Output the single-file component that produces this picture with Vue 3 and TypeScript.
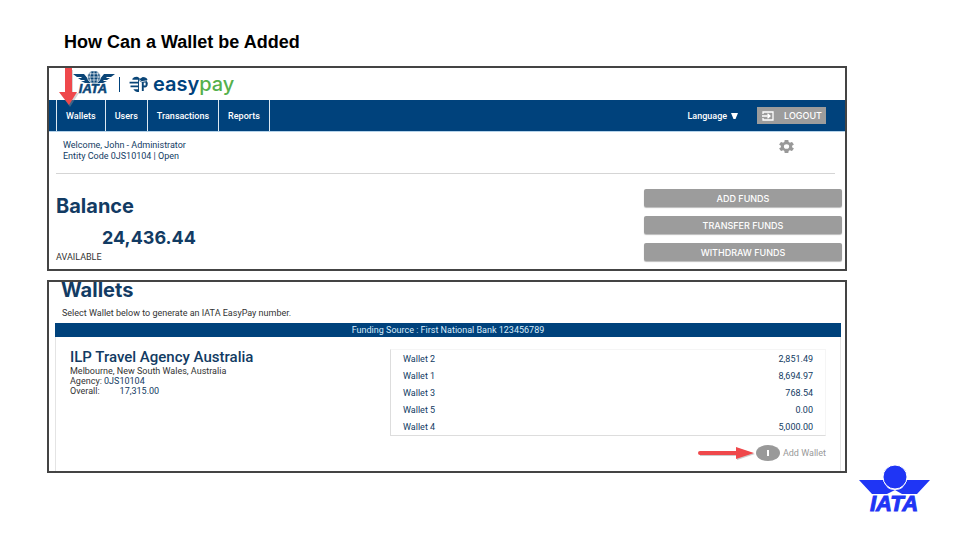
<script setup lang="ts">
interface Wallet {
  name: string
  amount: string
}

const navItems: string[] = ['Wallets', 'Users', 'Transactions', 'Reports']
const fundActions: string[] = ['ADD FUNDS', 'TRANSFER FUNDS', 'WITHDRAW FUNDS']
const wallets: Wallet[] = [
  { name: 'Wallet 2', amount: '2,851.49' },
  { name: 'Wallet 1', amount: '8,694.97' },
  { name: 'Wallet 3', amount: '768.54' },
  { name: 'Wallet 5', amount: '0.00' },
  { name: 'Wallet 4', amount: '5,000.00' },
]
</script>

<template>
  <main class="slide">
    <div class="content">
      <h1 class="title">How Can a Wallet be Added</h1>

      <section class="frame account">
        <header class="brand">
          <svg class="brand-iata" viewBox="0 0 42 26" role="img" aria-label="IATA">
            <g fill="#0a4577">
              <path d="M0 3H11L16 9H26L31 3H42L38 6H34L33 7H37L34 9H31L30 10H34L30 12H24L21 10L18 12H12L8 10H12L11 9H8L5 7H9L8 6H4Z" />
              <circle cx="21" cy="6" r="6.4" stroke="#fff" stroke-width="0.8" />
              <path d="M14.8 6H27.2M16 2.800H26M16 9H26M21 0V12M18 1Q15.500 6 18 11M24 1Q26.500 6 24 11" fill="none" stroke="#fff" stroke-width="0.7" />
              <text x="20" y="22" text-anchor="middle" class="iata-small">IATA</text>
            </g>
          </svg>
          <span class="brand-rule"></span>
          <svg class="brand-mark" viewBox="0 0 20 18" aria-hidden="true">
            <path d="M3 3Q5 0 9 1L11 3L14 1Q18 1 19 4L18 5Q20 7 19 10Q18 13 15 12V16H13V7L10 5V17Q6 17 4 14H9V12H1V10H9V8H0V6H9V4H3Z" fill="#0a4577" />
            <path d="M15 7H17V10H15Z" fill="#fff" />
            <path d="M10 4L13 6L18 5" stroke="#fff" stroke-width="0.8" fill="none" />
          </svg>
          <span class="wordmark">easy<span class="wordmark-pay">pay</span></span>
        </header>

        <nav class="navbar">
          <a v-for="item in navItems" :key="item" href="#" class="nav-link">{{ item }}</a>
          <button type="button" class="language">
            Language
            <svg class="caret" viewBox="0 0 7 6" aria-hidden="true"><path d="M0 0H7L4.500 6H2.500Z" fill="#fff" /></svg>
          </button>
          <button type="button" class="logout">
            <svg class="logout-icon" viewBox="0 0 12 10" aria-hidden="true">
              <path d="M1 3V1H11V9H1V7M0 5H8M5.500 2.700L8 5L5.500 7.300" fill="none" stroke="#fff" stroke-width="1.300" />
            </svg>
            LOGOUT
          </button>
        </nav>

        <div class="welcome">
          <p class="welcome-text">Welcome, John - Administrator<br />Entity Code 0JS10104 | Open</p>
          <button type="button" class="settings" aria-label="Settings">
            <svg class="gear" viewBox="2 2 20 20" preserveAspectRatio="none" aria-hidden="true">
              <path fill="#999" d="M19.430 12.980c.04-.32.07-.64.07-.98s-.03-.66-.07-.98l2.110-1.650c.19-.15.24-.42.12-.64l-2-3.460c-.12-.22-.39-.3-.61-.22l-2.490 1c-.52-.4-1.080-.73-1.690-.98l-.38-2.650C14.460 2.180 14.250 2 14 2h-4c-.25 0-.46.18-.49.42l-.38 2.650c-.61.25-1.170.59-1.690.98l-2.490-1c-.23-.09-.49 0-.61.22l-2 3.460c-.13.22-.07.49.12.64l2.110 1.650c-.04.32-.07.65-.07.98s.03.66.07.98l-2.110 1.650c-.19.15-.24.42-.12.64l2 3.460c.12.22.39.3.61.22l2.490-1c.52.4 1.080.73 1.690.98l.38 2.650c.03.24.24.42.49.42h4c.25 0 .46-.18.49-.42l.38-2.650c.61-.25 1.170-.59 1.690-.98l2.490 1c.23.09.49 0 .61-.22l2-3.460c.12-.22.07-.49-.12-.64zM12 15.500a3.500 3.500 0 1 1 0-7 3.500 3.500 0 0 1 0 7z" />
            </svg>
          </button>
        </div>

        <div class="summary">
          <div class="balance">
            <h2 class="heading">Balance</h2>
            <p class="balance-value">24,436.44</p>
            <p class="balance-note">AVAILABLE</p>
          </div>
          <div class="actions">
            <button v-for="action in fundActions" :key="action" type="button" class="action">{{ action }}</button>
          </div>
        </div>

        <svg class="arrow-down" viewBox="0 0 20 39" aria-hidden="true">
          <path d="M7 2H14V25H20L11 39L1 25H7Z" fill="#999" opacity="0.4" />
          <path d="M6 0H13V24H18L10 37L0 24H6Z" fill="#ef484b" />
        </svg>
      </section>

      <section class="frame wallets">
        <h2 class="heading">Wallets</h2>
        <p class="hint">Select Wallet below to generate an IATA EasyPay number.</p>
        <div class="source">Funding Source : First National Bank 123456789</div>
        <div class="card">
          <div class="agency">
            <h3 class="agency-name">ILP Travel Agency Australia</h3>
            <p class="agency-line">Melbourne, New South Wales, Australia</p>
            <p class="agency-line">Agency: <span class="strong">0JS10104</span></p>
            <p class="agency-line overall"><span>Overall:</span><span class="strong">17,315.00</span></p>
          </div>
          <div class="wallet-side">
            <table class="wallet-table" aria-label="Wallets">
              <tbody>
                <tr v-for="wallet in wallets" :key="wallet.name">
                  <th scope="row">{{ wallet.name }}</th>
                  <td>{{ wallet.amount }}</td>
                </tr>
              </tbody>
            </table>
            <button type="button" class="add-wallet">
              <svg class="arrow-right" viewBox="0 0 58 14" aria-hidden="true">
                <path d="M2 6H39V2L57 8L39 14V10H2Z" fill="#999" opacity="0.5" />
                <path d="M2 5Q0 5 0 7Q0 9 2 9H38V13L56 7L38 1V5Z" fill="#ef484b" />
              </svg>
              <svg class="plus" viewBox="0 0 24 16" aria-hidden="true">
                <ellipse cx="12" cy="8" rx="12" ry="8" fill="#999" />
                <path d="M12 5V11" stroke="#fff" stroke-width="2" />
              </svg>
              Add Wallet
            </button>
          </div>
        </div>
      </section>
    </div>

    <svg class="corner-logo" viewBox="0 0 72 50" role="img" aria-label="IATA">
      <g fill="#1f35f5">
        <path d="M0 15H24Q27 25 36 25Q45 25 48 15H71L58 29H43L36 25L28 29H13Z" />
        <circle cx="36" cy="12" r="12" stroke="#fff" stroke-width="1" />
        <text x="35" y="46" text-anchor="middle" class="iata-large">IATA</text>
      </g>
    </svg>
  </main>
</template>

<style>
body {
  margin: 0;
  background: #fff;
}
</style>

<style scoped>
.slide {
  --navy: #00427c;
  --ink: #123b63;
  --gray: #9c9c9c;
  box-sizing: border-box;
  min-height: 100vh;
  padding: 32px 29px 25px 47px;
  display: grid;
  grid-template-columns: minmax(0, 1fr) auto;
  column-gap: 12px;
  font-family: Roboto, "Liberation Sans", sans-serif;
  font-size: 9px;
  color: var(--ink);
}
h1, h2, h3, p {
  margin: 0;
}
button {
  border: 0;
  padding: 0;
  background: none;
  font: inherit;
  color: inherit;
}
.title {
  padding-left: 17px;
  margin-bottom: 14px;
  font: bold 18px/20px "Liberation Sans", sans-serif;
  color: #000;
}
.frame {
  position: relative;
  border: 2px solid #444;
}
.account {
  margin-bottom: 9px;
  padding-bottom: 7px;
}
.brand {
  display: flex;
  align-items: center;
  height: 32px;
  padding-left: 24px;
}
.brand-iata {
  width: 42px;
  height: 26px;
}
.iata-small {
  font: italic bold 13px "Liberation Sans", sans-serif;
  stroke: #0a4577;
  stroke-width: 0.5px;
}
.brand-rule {
  width: 1px;
  height: 15px;
  margin: 0 9px 0 4px;
  background: var(--navy);
}
.brand-mark {
  width: 20px;
  height: 17px;
  margin-right: 4px;
}
.wordmark {
  font: 600 20px/20px Inter, sans-serif;
  color: var(--navy);
}
.wordmark-pay {
  font-weight: 500;
  color: #55b04b;
}
.navbar {
  display: flex;
  align-items: stretch;
  height: 31px;
  padding: 0 19px 0 7px;
  background: var(--navy);
  border-bottom: 1px solid #b5d3ea;
  color: #fff;
  font-weight: 500;
}
.nav-link {
  display: flex;
  align-items: center;
  padding: 0 9px;
  border-left: 1px solid #dce8f2;
  color: #fff;
  text-decoration: none;
}
.nav-link:nth-child(4) {
  border-right: 1px solid #dce8f2;
}
.language {
  display: flex;
  align-items: center;
  gap: 4px;
  margin-left: auto;
  margin-right: 19px;
}
.caret {
  width: 7px;
  height: 6px;
}
.logout {
  display: flex;
  align-items: center;
  align-self: center;
  gap: 10px;
  height: 17px;
  padding: 0 4px 0 5px;
  background: var(--gray);
  font-family: Inter, sans-serif;
}
.logout-icon {
  width: 12px;
  height: 10px;
}
.welcome {
  display: flex;
  align-items: flex-start;
  justify-content: space-between;
  margin: 0 10px 0 7px;
  padding: 8px 41px 11px 7px;
  border-bottom: 1px solid #d5d5d5;
}
.welcome-text {
  line-height: 11px;
}
.gear {
  display: block;
  width: 15px;
  height: 13px;
}
.summary {
  display: flex;
  justify-content: space-between;
  padding: 15px 3px 0 7px;
}
.heading {
  font: bold 20px/20px Inter, sans-serif;
}
.balance {
  padding-top: 7px;
}
.balance-value {
  padding: 13px 0 5px 46px;
  font: bold 18px/18px Inter, sans-serif;
}
.balance-note {
  line-height: 10px;
  color: #333;
}
.actions {
  display: flex;
  flex-direction: column;
  gap: 9px;
  flex: 0 0 198px;
}
.action {
  height: 18px;
  border-radius: 2px;
  background: var(--gray);
  box-shadow: 0 1px 1px #bbb;
  color: #fff;
  font-family: Inter, sans-serif;
  font-weight: 500;
}
.arrow-down {
  position: absolute;
  top: 0;
  left: 10px;
  width: 20px;
  height: 39px;
}
.wallets {
  padding: 0 4px 0 6px;
}
.wallets .heading {
  padding: 0 0 8px 6px;
  line-height: 17px;
}
.hint {
  padding: 0 0 4px 7px;
  line-height: 12px;
  color: #333;
}
.source {
  background: var(--navy);
  color: #d8ecfa;
  line-height: 14px;
  text-align: center;
}
.card {
  display: flex;
  padding: 12px 14px 10px;
  border: solid #e4e4e4;
  border-width: 0 1px;
}
.agency {
  flex: 0 0 320px;
}
.agency-name {
  font: 500 15px/16px Roboto, sans-serif;
}
.agency-line {
  line-height: 10px;
  color: #333;
}
.agency-line:nth-child(2) {
  padding-top: 1px;
}
.agency .strong {
  color: var(--ink);
}
.overall {
  display: flex;
  gap: 20px;
}
.wallet-side {
  flex: 1;
}
.wallet-table {
  width: 100%;
  box-sizing: border-box;
  border-collapse: separate;
  border-spacing: 0;
  border: 1px solid #ddd;
  border-top-color: #f5f5f5;
  border-right-color: #f5f5f5;
}
.wallet-table th,
.wallet-table td {
  height: 17px;
  padding: 0 12px;
  font-weight: 400;
  text-align: left;
}
.wallet-table td {
  text-align: right;
}
.add-wallet {
  display: flex;
  align-items: center;
  margin: 9px 0 0 auto;
  color: #999;
}
.arrow-right {
  width: 58px;
  height: 14px;
}
.plus {
  width: 24px;
  height: 16px;
  margin-right: 3px;
}
.corner-logo {
  align-self: end;
  width: 72px;
  height: 50px;
}
.iata-large {
  font: italic bold 22px "Liberation Sans", sans-serif;
  stroke: #1f35f5;
  stroke-width: 1px;
}
</style>
